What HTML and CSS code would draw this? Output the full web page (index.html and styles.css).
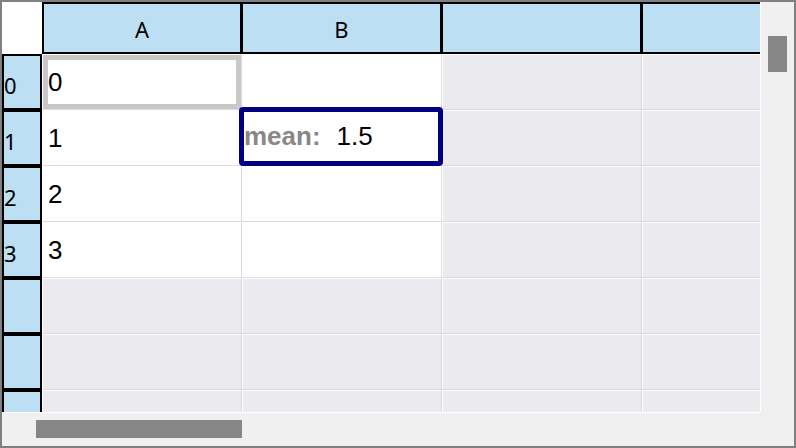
FILE: index.html
```html
<!DOCTYPE html>
<html>
<head>
<meta charset="utf-8">
<link rel="stylesheet" href="styles.css">
</head>
<body>
<div class="frame">
  <div class="viewport">
    <div class="sheet">
      <div class="corner"></div>
      <div class="colhead first">A</div>
      <div class="colhead">B</div>
      <div class="colhead"></div>
      <div class="colhead"></div>

      <div class="rowhead">0</div>
      <div class="cell filled sel">0</div>
      <div class="cell filled"></div>
      <div class="cell"></div>
      <div class="cell"></div>

      <div class="rowhead">1</div>
      <div class="cell filled">1</div>
      <div class="cell filled"></div>
      <div class="cell"></div>
      <div class="cell"></div>

      <div class="rowhead">2</div>
      <div class="cell filled">2</div>
      <div class="cell filled"></div>
      <div class="cell"></div>
      <div class="cell"></div>

      <div class="rowhead">3</div>
      <div class="cell filled">3</div>
      <div class="cell filled"></div>
      <div class="cell"></div>
      <div class="cell"></div>

      <div class="rowhead"></div>
      <div class="cell"></div>
      <div class="cell"></div>
      <div class="cell"></div>
      <div class="cell"></div>

      <div class="rowhead"></div>
      <div class="cell"></div>
      <div class="cell"></div>
      <div class="cell"></div>
      <div class="cell"></div>

      <div class="rowhead"></div>
      <div class="cell"></div>
      <div class="cell"></div>
      <div class="cell"></div>
      <div class="cell"></div>
    </div>
    <div class="editor"><span class="label">mean:</span><span class="value">1.5</span></div>
  </div>
  <div class="vscroll"><div class="vthumb"></div></div>
  <div class="hscroll"><div class="hthumb"></div></div>
  <div class="scorner"></div>
</div>
</body>
</html>
```

FILE: styles.css
```css
html, body {
  margin: 0;
  padding: 0;
  background: #ffffff;
}

.frame {
  width: 796px;
  height: 448px;
  box-sizing: border-box;
  border: 2px solid #808080;
  display: grid;
  grid-template-columns: 758px 34px;
  grid-template-rows: 410px 34px;
  background: #f0f0f0;
}

.viewport {
  position: relative;
  overflow: hidden;
  background: #ebeaef;
}

.sheet {
  display: grid;
  grid-template-columns: 40px repeat(4, 200px);
  grid-template-rows: 52px repeat(7, 56px);
  width: 840px;
}

.corner {
  background: #ffffff;
}

.colhead {
  box-sizing: border-box;
  background: #bcdff4;
  border-top: 2px solid #000;
  border-bottom: 2px solid #000;
  border-right: 2px solid #000;
  border-left: 1px solid #000;
  display: flex;
  align-items: center;
  justify-content: center;
  font-family: "Noto Sans", "Open Sans", sans-serif;
  font-size: 22px;
  color: #000;
  padding-top: 2px;
}

.colhead.first {
  border-left-width: 2px;
}

.rowhead {
  box-sizing: border-box;
  background: #bcdff4;
  border: 2px solid #000;
  display: flex;
  align-items: center;
  font-family: "Noto Sans", "Open Sans", sans-serif;
  font-size: 22px;
  color: #000;
  padding-left: 0;
  padding-top: 5px;
}

.cell {
  box-sizing: border-box;
  background: #ebeaef;
  border-top: 1px solid #ffffff;
  border-left: 1px solid #ffffff;
  border-right: 1px solid #d9d9dc;
  border-bottom: 1px solid #d9d9dc;
  display: flex;
  align-items: center;
  padding-left: 5px;
  font-family: "Liberation Sans", Arial, sans-serif;
  font-size: 26px;
  color: #000;
}

.cell.filled {
  background: #ffffff;
  border-top-color: #ffffff;
  border-left-color: #ffffff;
  border-right-color: #dcdcdc;
  border-bottom-color: #dcdcdc;
}

.cell.sel {
  box-shadow: inset 0 0 0 5px #c8c8c8;
  padding-left: 5px;
}

.editor {
  position: absolute;
  left: 237px;
  top: 105px;
  width: 204px;
  height: 59px;
  box-sizing: border-box;
  border: 5px solid #000080;
  border-radius: 4px;
  background: #ffffff;
  display: flex;
  align-items: center;
  font-family: "Liberation Sans", Arial, sans-serif;
  font-size: 26px;
}

.editor .label {
  font-weight: bold;
  color: #888888;
}

.editor .value {
  margin-left: 16px;
  color: #000;
}

.vscroll {
  background: #f0f0f0;
  border-left: 1px solid #ffffff;
  box-sizing: border-box;
  padding: 34px 0 0 7px;
}

.vthumb {
  width: 19px;
  height: 36px;
  background: #868686;
}

.hscroll {
  background: #f0f0f0;
  border-top: 1px solid #ffffff;
  box-sizing: border-box;
  padding: 7px 0 0 34px;
}

.hthumb {
  width: 206px;
  height: 18px;
  background: #868686;
}

.scorner {
  background: #f0f0f0;
}
```
